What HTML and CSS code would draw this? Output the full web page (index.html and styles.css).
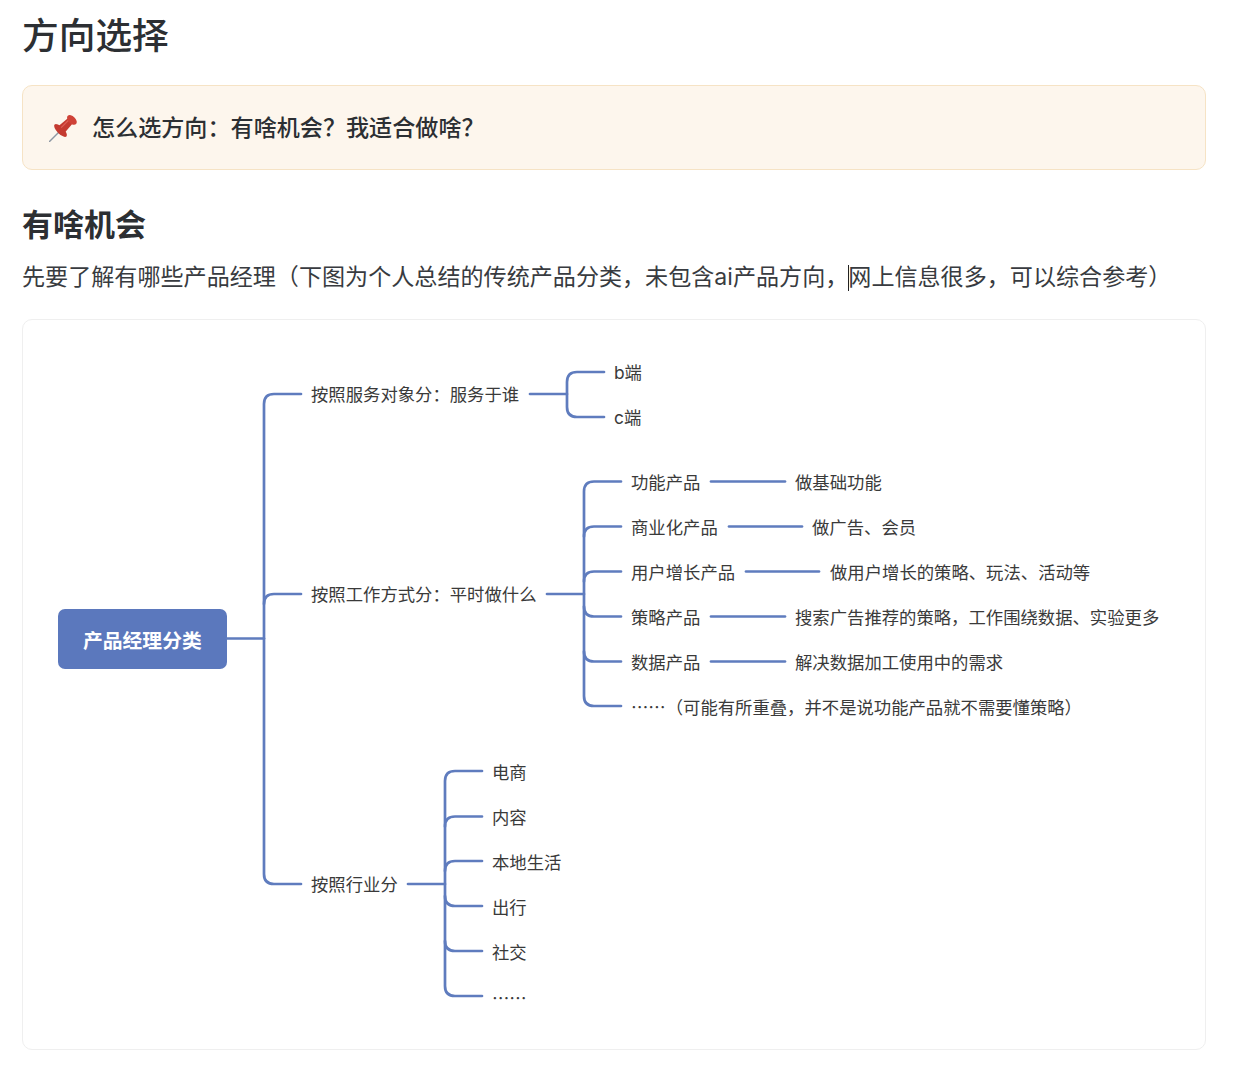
FILE: index.html
```html
<!DOCTYPE html>
<html lang="zh-CN">
<head>
<meta charset="utf-8">
<title>方向选择</title>
<link rel="stylesheet" href="styles.css">
</head>
<body>
<main class="doc">
  <h1 class="title">方向选择</h1>
  <aside class="callout">
    <svg class="pin" width="28" height="28" viewBox="0 0 28 28" aria-hidden="true">
      <path class="pin-needle" d="M0.5 27.5L11 17"/>
      <g transform="translate(14 14) rotate(45)">
        <path class="pin-body" d="M-3.6 -10H3.6L4.6 2.5H-4.6Z"/>
        <ellipse class="pin-body" cx="0" cy="3.5" rx="8.4" ry="3.4"/>
        <ellipse class="pin-head" cx="0.6" cy="-12" rx="5.8" ry="3.6"/>
        <path class="pin-shine" d="M-1.6 -9V1"/>
      </g>
    </svg>
    <span class="callout-text">怎么选方向：有啥机会？我适合做啥？</span>
  </aside>
  <h2 class="subtitle">有啥机会</h2>
  <p class="para">先要了解有哪些产品经理（下图为个人总结的传统产品分类，未包含ai产品方向，<span class="caret"></span>网上信息很多，可以综合参考）</p>
  <figure class="card">
    <svg class="map" width="1182" height="729" viewBox="23 320 1182 729" role="img">
      <rect class="root" x="58" y="609" width="169" height="60" rx="7"/>
      <g class="links">
        <path d="M227 638.5H264"/>
        <path d="M301 394H274Q264 394 264 404V874Q264 884 274 884H301"/>
        <path d="M301 594H274Q264 594 264 604"/>

        <path d="M530 394H567"/>
        <path d="M604 372H577Q567 372 567 382V407Q567 417 577 417H604"/>

        <path d="M547 594H584"/>
        <path d="M621 481.5H594Q584 481.5 584 491.5V696Q584 706 594 706H621"/>
        <path d="M621 526.5H594Q584 526.5 584 536.5"/>
        <path d="M621 571.5H594Q584 571.5 584 581.5"/>
        <path d="M621 616.5H594Q584 616.5 584 606.5"/>
        <path d="M621 661.5H594Q584 661.5 584 651.5"/>
        <path d="M711 481.5H785"/>
        <path d="M729 526.5H802"/>
        <path d="M746 571.5H819"/>
        <path d="M711 616.5H785"/>
        <path d="M711 661.5H785"/>

        <path d="M408 884H445"/>
        <path d="M482 771H455Q445 771 445 781V986Q445 996 455 996H482"/>
        <path d="M482 816.5H455Q445 816.5 445 826.5"/>
        <path d="M482 861H455Q445 861 445 871"/>
        <path d="M482 906H455Q445 906 445 896"/>
        <path d="M482 951H455Q445 951 445 941"/>
      </g>
      <text class="root-label" x="83" y="648">产品经理分类</text>
      <g class="labels">
        <text x="311" y="401">按照服务对象分：服务于谁</text>
        <text x="614" y="379">b端</text>
        <text x="614" y="424">c端</text>
        <text x="311" y="601">按照工作方式分：平时做什么</text>
        <text x="631" y="489">功能产品</text>
        <text x="795" y="489">做基础功能</text>
        <text x="631" y="534">商业化产品</text>
        <text x="812" y="534">做广告、会员</text>
        <text x="631" y="579">用户增长产品</text>
        <text x="830" y="579">做用户增长的策略、玩法、活动等</text>
        <text x="631" y="624">策略产品</text>
        <text x="795" y="624">搜索广告推荐的策略，工作围绕数据、实验更多</text>
        <text x="631" y="669">数据产品</text>
        <text x="795" y="669">解决数据加工使用中的需求</text>
        <text class="cjk" x="631" y="714">……（可能有所重叠，并不是说功能产品就不需要懂策略）</text>
        <text x="311" y="891">按照行业分</text>
        <text x="492" y="779">电商</text>
        <text x="492" y="824">内容</text>
        <text x="492" y="869">本地生活</text>
        <text x="492" y="914">出行</text>
        <text x="492" y="959">社交</text>
        <text class="cjk" x="492" y="1005">……</text>
      </g>
    </svg>
  </figure>
</main>
</body>
</html>
```

FILE: styles.css
```css
* {
  box-sizing: border-box;
}

html,
body {
  margin: 0;
  background: #fff;
}

body {
  color: #2c2f33;
  font-family: Inter, "Noto Sans CJK SC", "Noto Sans", sans-serif;
}

.doc {
  display: flex;
  flex-direction: column;
  width: 1242px;
  padding: 11px 36px 30px 22px;
}

.title {
  margin: 0;
  font-size: 36.7px;
  font-weight: 500;
  line-height: 50px;
}

.callout {
  display: flex;
  align-items: center;
  gap: 15px;
  height: 85px;
  margin-top: 24px;
  padding-left: 26px;
  background: #fdf6ed;
  border: 1px solid #f6e3c5;
  border-radius: 10px;
}

.pin {
  flex: none;
}

.pin-needle {
  fill: none;
  stroke: #8d97a3;
  stroke-width: 1.4;
  stroke-linecap: round;
}

.pin-body {
  fill: #c43a30;
}

.pin-head {
  fill: #cf4237;
}

.pin-shine {
  fill: none;
  stroke: #dd5f56;
  stroke-width: 1.2;
}

.callout-text {
  font-size: 23.1px;
  font-weight: 500;
  line-height: 32px;
}

.subtitle {
  margin: 33px 0 0;
  font-size: 31px;
  font-weight: 600;
  line-height: 44px;
}

.para {
  margin: 12px 0 0;
  color: #383b40;
  font-size: 23.08px;
  font-weight: 400;
  line-height: 36px;
  white-space: nowrap;
}

.caret {
  display: inline-block;
  height: 26px;
  margin-right: -1px;
  border-left: 1px solid #222;
  vertical-align: -6px;
}

.card {
  width: 1184px;
  height: 731px;
  margin: 24px 0 0;
  border: 1px solid #efefef;
  border-radius: 10px;
}

.map {
  display: block;
}

.root {
  fill: #5b78bd;
}

.links path {
  fill: none;
  stroke: #5f7cbe;
  stroke-width: 2.7;
  stroke-linecap: round;
}

.root-label {
  fill: #fff;
  font-size: 19.8px;
  font-weight: 700;
}

.labels text {
  fill: #3a3a3a;
  font-size: 17.35px;
}

.labels .cjk {
  font-family: "Noto Sans CJK SC", sans-serif;
}
```
